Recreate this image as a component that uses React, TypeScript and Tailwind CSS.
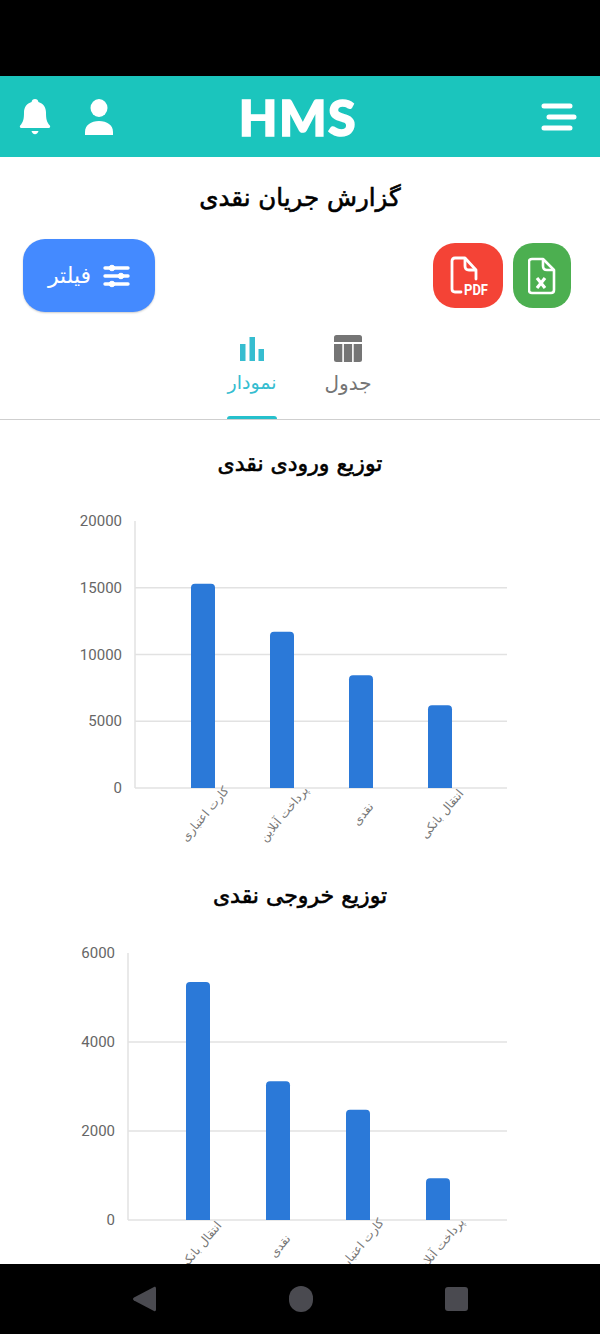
const persian = "font-['DejaVu_Sans','Noto_Sans',sans-serif]";

type Bar = { label: string; value: number };

const incoming: Bar[] = [
  { label: 'کارت اعتباری', value: 15300 },
  { label: 'پرداخت آنلاین', value: 11700 },
  { label: 'نقدی', value: 8450 },
  { label: 'انتقال بانکی', value: 6200 },
];

const outgoing: Bar[] = [
  { label: 'انتقال بانکی', value: 5350 },
  { label: 'نقدی', value: 3120 },
  { label: 'کارت اعتباری', value: 2480 },
  { label: 'پرداخت آنلاین', value: 940 },
];

const BellIcon = () => (
  <svg width="32" height="36" viewBox="0 0 32 36" fill="white">
    <path d="M16 0c1.900 0 3.200 1.300 3.400 3 4.800 1.400 7.600 5.400 7.600 10.600 0 6.200.6 9.400 3.800 13 .8 1 .3 2.400-1 2.400H2.200c-1.300 0-1.800-1.400-1-2.400 3.200-3.600 3.800-6.800 3.800-13C5 8.400 7.800 4.400 12.600 3c.2-1.700 1.500-3 3.400-3z" />
    <path d="M12.500 32h7c-.4 2-1.800 3.200-3.500 3.200s-3.100-1.200-3.500-3.200z" />
  </svg>
);

const UserIcon = () => (
  <svg width="30" height="36" viewBox="0 0 30 36" fill="white">
    <ellipse cx="15" cy="9" rx="8.500" ry="9" />
    <path d="M1 36v-3c0-7 6-11 14-11s14 4 14 11v3z" />
  </svg>
);

const MenuIcon = () => (
  <svg width="36" height="28" viewBox="0 0 36 28" stroke="white" strokeWidth="5" strokeLinecap="round">
    <path d="M3 3h26M8 14h25M3 25h26" />
  </svg>
);

const SlidersIcon = () => (
  <svg width="27" height="24" viewBox="0 0 27 24" fill="white" stroke="white" strokeWidth="3.400" strokeLinecap="round">
    <path d="M2 4h23M2 12h23M2 20h23" />
    <circle cx="9" cy="4" r="2.800" strokeWidth="1" />
    <circle cx="18" cy="12" r="2.800" strokeWidth="1" />
    <circle cx="9" cy="20" r="2.800" strokeWidth="1" />
  </svg>
);

const PdfIcon = () => (
  <svg width="44" height="42" viewBox="-2 0 44 42" fill="none" stroke="white" strokeWidth="2.800" strokeLinejoin="round" strokeLinecap="round">
    <path d="M13 37H7c-2 0-3-1.200-3-3V6c0-2 1-3 3-3h10l11 12v9" />
    <path d="M17 4v7c0 2.500 1.500 4 4 4h6" />
    <text x="16" y="40" fill="white" stroke="none" fontSize="15" fontWeight="700" fontFamily="Roboto, sans-serif" textLength="24" lengthAdjust="spacingAndGlyphs">PDF</text>
  </svg>
);

const ExcelIcon = () => (
  <svg width="28" height="38" viewBox="0 0 28 38" fill="none" stroke="white" strokeWidth="2.600" strokeLinejoin="round" strokeLinecap="round">
    <path d="M4 2h11l11 11v20c0 2-1 3-3 3H4c-2 0-3-1-3-3V5c0-2 1-3 3-3z" />
    <path d="M15 3v6c0 2.500 1.500 4 4 4h6" />
    <path d="M9 21l8 10M17 21l-8 10" strokeWidth="3.200" strokeLinecap="butt" />
  </svg>
);

const TableIcon = () => (
  <svg width="28" height="27" viewBox="0 0 28 27" fill="#757575">
    <path d="M2.500 0h23A2.500 2.500 0 0 1 28 2.500V7H0V2.500A2.500 2.500 0 0 1 2.500 0z" />
    <path d="M0 9h8.300v18H2.500A2.500 2.500 0 0 1 0 24.500z" />
    <rect x="9.900" y="9" width="8.200" height="18" />
    <path d="M19.700 9H28v15.500a2.500 2.500 0 0 1-2.500 2.500h-5.800z" />
  </svg>
);

const BarsIcon = () => (
  <svg width="24" height="24" viewBox="0 0 24 24" fill="#36bdd0">
    <rect x="0" y="7" width="5.500" height="17" />
    <rect x="9.500" y="0" width="5.500" height="24" />
    <rect x="18.500" y="12" width="5.500" height="12" />
  </svg>
);

const Chart = ({
  title,
  data,
  max,
  ticks,
  axisX,
  centers,
  className,
  plotClassName,
}: {
  title: string;
  data: Bar[];
  max: number;
  ticks: number[];
  axisX: number;
  centers: number[];
  className: string;
  plotClassName: string;
}) => {
  const top = 10;
  const plot = 267;
  const yOf = (v: number) => top + plot - (v / max) * plot;
  return (
    <section className={className}>
      <h2 className={`text-center text-[22px] leading-[30px] font-normal text-black [-webkit-text-stroke:0.6px_black] ${persian}`}>{title}</h2>
      <svg width="600" height="366" viewBox="0 0 600 366" className={`block ${plotClassName}`}>
        {ticks.map((t) => (
          <g key={t}>
            {t > 0 && t < max && <line x1={axisX} x2="507" y1={yOf(t)} y2={yOf(t)} stroke="#e2e2e2" strokeWidth="1.500" />}
            <text x={axisX - 13} y={yOf(t) + 5} textAnchor="end" fontSize="15" fill="#666" fontFamily="Roboto, sans-serif">
              {t}
            </text>
          </g>
        ))}
        <line x1={axisX} x2={axisX} y1={top} y2={top + plot} stroke="#e2e2e2" strokeWidth="1.500" />
        <line x1={axisX} x2="507" y1={top + plot} y2={top + plot} stroke="#e2e2e2" strokeWidth="1.500" />
        {data.map((d, i) => {
          const y = yOf(d.value);
          const x = centers[i] - 12;
          const lx = centers[i] + 2;
          const ly = top + plot + 26;
          return (
            <g key={d.label}>
              <path d={`M${x} ${top + plot}V${y + 4}a4 4 0 0 1 4-4h16a4 4 0 0 1 4 4V${top + plot}z`} fill="#2b79d8" />
              <text
                x={lx}
                y={ly}
                textAnchor="middle"
                dominantBaseline="central"
                fontSize="12"
                fill="#777"
                fontFamily="'DejaVu Sans', sans-serif"
                transform={`rotate(-50 ${lx} ${ly})`}
              >
                {d.label}
              </text>
            </g>
          );
        })}
      </svg>
    </section>
  );
};

export default function App() {
  return (
    <div className="flex h-[1334px] w-[600px] flex-col overflow-hidden bg-black">
      <div className="h-[76px] shrink-0" />
      <header className="flex h-[81px] shrink-0 items-center justify-between bg-[#1bc5bd] pr-[23px] pl-[19px]">
        <div className="flex w-[110px] items-center gap-[33px]">
          <BellIcon />
          <UserIcon />
        </div>
        <div className="text-[50px] leading-none font-black tracking-[1.5px] text-white [-webkit-text-stroke:1.5px_white] font-['Lato',sans-serif]">HMS</div>
        <div className="flex w-[110px] justify-end">
          <MenuIcon />
        </div>
      </header>

      <main className="min-h-0 flex-1 overflow-hidden bg-white">
        <h1 className={`pt-[26px] text-center text-[24.500px] leading-[30px] font-normal text-black [-webkit-text-stroke:0.6px_black] ${persian}`}>گزارش جریان نقدی</h1>

        <div className="mt-[26px] flex items-center justify-between pr-[29px] pl-[23px]">
          <button className="flex h-[73px] w-[132px] items-center justify-center gap-[12px] rounded-[22px] bg-[#448aff] shadow-[0_1px_2px_rgba(0,0,0,0.2)]">
            <span className={`text-[22px] text-white ${persian}`}>فیلتر</span>
            <SlidersIcon />
          </button>
          <div className="flex items-center gap-[10px]">
            <div className="flex h-[65px] w-[70px] items-center justify-center rounded-[22px] bg-[#f44336]">
              <PdfIcon />
            </div>
            <div className="flex h-[65px] w-[58px] items-center justify-center rounded-[20px] bg-[#4caf50]">
              <ExcelIcon />
            </div>
          </div>
        </div>

        <div dir="rtl" className="flex h-[108px] justify-center border-b-[1.500px] border-[#cfcfcf]">
          <div className="flex w-24 flex-col items-center pt-[23px]">
            <TableIcon />
            <span className={`mt-[6px] text-[20px] leading-[30px] text-[#757575] ${persian}`}>جدول</span>
          </div>
          <div className="relative flex w-24 flex-col items-center pt-[25px]">
            <BarsIcon />
            <span className={`mt-[6px] text-[19px] leading-[30px] text-[#36bdd0] ${persian}`}>نمودار</span>
            <div className="absolute bottom-0 left-[23px] h-[3px] w-[50px] rounded-t-md bg-[#26c0cc]" />
          </div>
        </div>

        <Chart
          className="pt-[29px]"
          plotClassName="mt-[32px]"
          title="توزیع ورودی نقدی"
          data={incoming}
          max={20000}
          ticks={[0, 5000, 10000, 15000, 20000]}
          axisX={135}
          centers={[203, 282, 361, 440]}
        />
        <Chart
          className="mt-1"
          plotClassName="mt-[32px]"
          title="توزیع خروجی نقدی"
          data={outgoing}
          max={6000}
          ticks={[0, 2000, 4000, 6000]}
          axisX={128}
          centers={[198, 278, 358, 438]}
        />
      </main>

      <nav className="flex h-[70px] shrink-0 items-center bg-black">
        <div className="flex w-full items-center justify-between px-[132px]">
          <svg width="24" height="26" viewBox="0 0 24 26" fill="#4a4a50">
            <path d="M22 1 2 11.500c-1.300.8-1.300 2.200 0 3L22 25c1 .5 2 0 2-1.500v-21C24 1 23 .5 22 1z" />
          </svg>
          <div className="h-[26px] w-[24px] rounded-full bg-[#4a4a50]" />
          <div className="h-[24px] w-[23px] rounded-[3px] bg-[#4a4a50]" />
        </div>
      </nav>
    </div>
  );
}
